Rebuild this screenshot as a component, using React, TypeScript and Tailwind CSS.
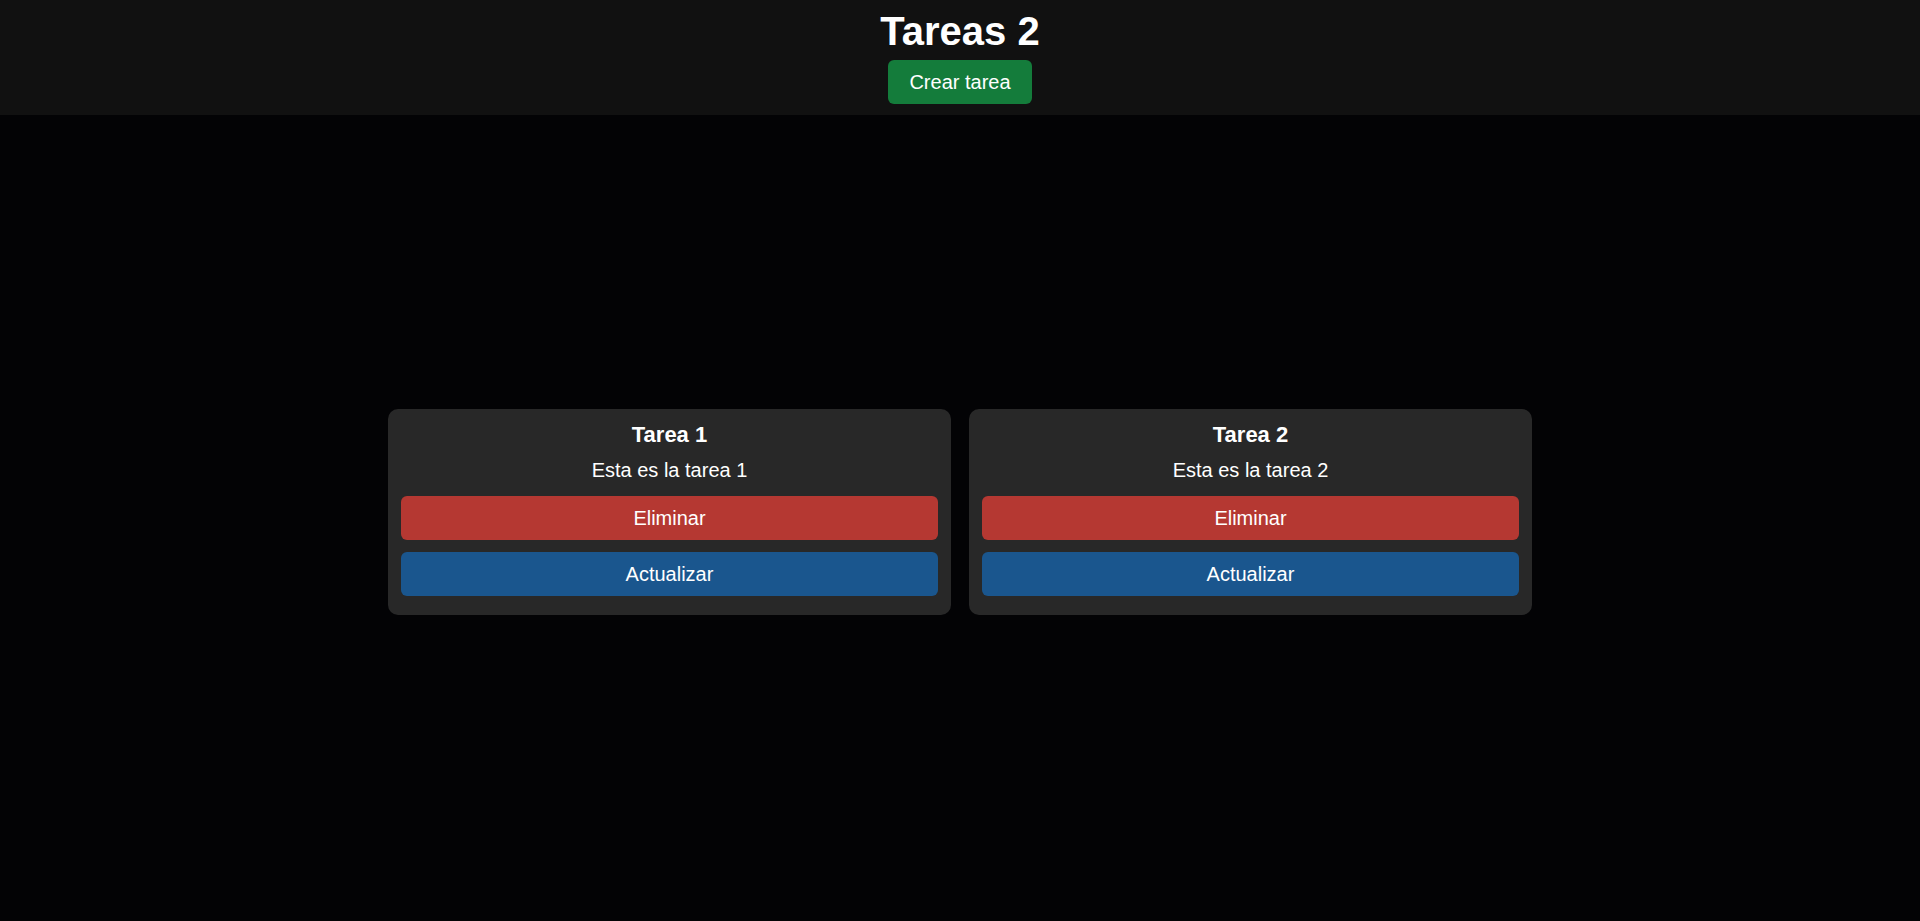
const tareas = [
  { id: 1, titulo: "Tarea 1", descripcion: "Esta es la tarea 1" },
  { id: 2, titulo: "Tarea 2", descripcion: "Esta es la tarea 2" },
];

function TareaCard({ titulo, descripcion }: { titulo: string; descripcion: string }) {
  return (
    <div className="flex w-[563px] flex-col rounded-[10px] bg-[#282828] px-[13px] pt-[13px] pb-[19px] text-center">
      <h3 className="text-[22px] leading-[25px] font-bold text-white">{titulo}</h3>
      <p className="mt-[12px] text-[20px] leading-[23px] text-white">{descripcion}</p>
      <button className="mt-[14px] flex h-[44px] items-center justify-center rounded-[6px] bg-[#b53832] pb-[1px] text-[20px] text-white">
        Eliminar
      </button>
      <button className="mt-[12px] flex h-[44px] items-center justify-center rounded-[6px] bg-[#1a568e] pb-[1px] text-[20px] text-white">
        Actualizar
      </button>
    </div>
  );
}

export default function App() {
  return (
    <div className="min-h-screen bg-[#030305] font-['Liberation_Sans',Arial,sans-serif]">
      <header className="flex h-[115px] flex-col items-center bg-[#111111] pt-[8px]">
        <h1 className="text-[40px] leading-[46px] font-bold text-white">Tareas 2</h1>
        <button className="mt-[6px] flex h-[44px] w-[144px] items-center justify-center rounded-[6px] bg-[#147c3b] pb-[1px] text-[20px] text-white">
          Crear tarea
        </button>
      </header>
      <main className="flex justify-center gap-[18px] pt-[294px]">
        {tareas.map((t) => (
          <TareaCard key={t.id} titulo={t.titulo} descripcion={t.descripcion} />
        ))}
      </main>
    </div>
  );
}
